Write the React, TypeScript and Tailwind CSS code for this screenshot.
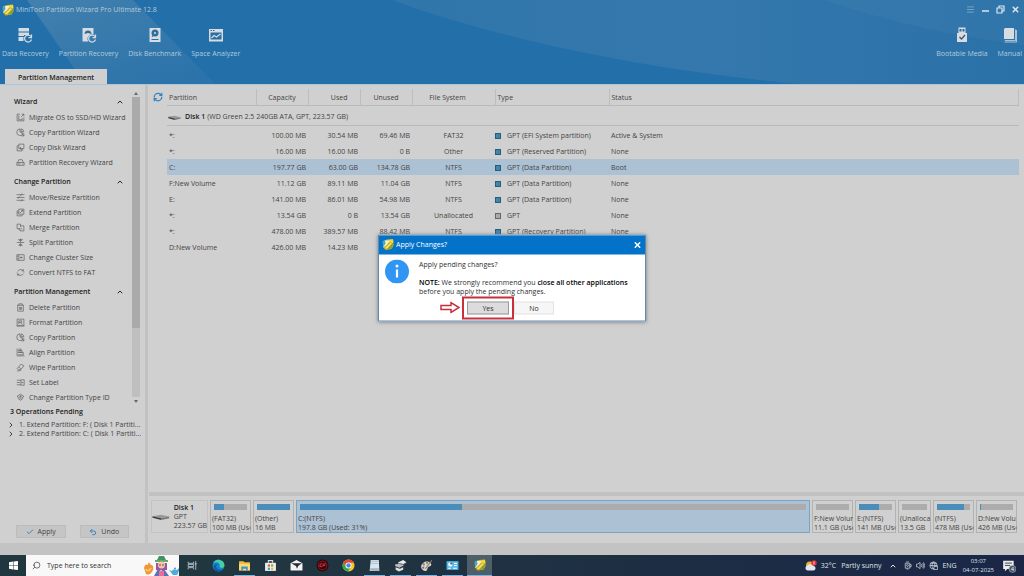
import type { ReactNode } from "react";
import { ChevronUp, ChevronRight, Search, Menu, X, RefreshCw, Check, Undo2 } from "lucide-react";

const sections = [
  {
    title: "Wizard",
    items: [
      ["migrate", "Migrate OS to SSD/HD Wizard"],
      ["pie", "Copy Partition Wizard"],
      ["copy", "Copy Disk Wizard"],
      ["drive", "Partition Recovery Wizard"],
    ],
  },
  {
    title: "Change Partition",
    items: [
      ["sliders", "Move/Resize Partition"],
      ["extend", "Extend Partition"],
      ["merge", "Merge Partition"],
      ["split", "Split Partition"],
      ["cluster", "Change Cluster Size"],
      ["convert", "Convert NTFS to FAT"],
    ],
  },
  {
    title: "Partition Management",
    items: [
      ["trash", "Delete Partition"],
      ["format", "Format Partition"],
      ["pie", "Copy Partition"],
      ["align", "Align Partition"],
      ["wipe", "Wipe Partition"],
      ["label", "Set Label"],
      ["layers", "Change Partition Type ID"],
    ],
  },
];

const rows = [
  { name: "*:", cap: "100.00 MB", used: "30.54 MB", free: "69.46 MB", fs: "FAT32", type: "GPT (EFI System partition)", status: "Active & System" },
  { name: "*:", cap: "16.00 MB", used: "16.00 MB", free: "0 B", fs: "Other", type: "GPT (Reserved Partition)", status: "None" },
  { name: "C:", cap: "197.77 GB", used: "63.00 GB", free: "134.78 GB", fs: "NTFS", type: "GPT (Data Partition)", status: "Boot" },
  { name: "F:New Volume", cap: "11.12 GB", used: "89.11 MB", free: "11.04 GB", fs: "NTFS", type: "GPT (Data Partition)", status: "None" },
  { name: "E:", cap: "141.00 MB", used: "86.01 MB", free: "54.98 MB", fs: "NTFS", type: "GPT (Data Partition)", status: "None" },
  { name: "*:", cap: "13.54 GB", used: "0 B", free: "13.54 GB", fs: "Unallocated", type: "GPT", status: "None" },
  { name: "*:", cap: "478.00 MB", used: "389.57 MB", free: "88.42 MB", fs: "NTFS", type: "GPT (Recovery Partition)", status: "None" },
  { name: "D:New Volume", cap: "426.00 MB", used: "14.23 MB", free: "", fs: "", type: "", status: "" },
];

const blocks = [
  { name: "(FAT32)", size: "100 MB (Us‹", fill: 31, width: "w-[41px]" },
  { name: "(Other)", size: "16 MB", fill: 100, width: "w-[41px]" },
  { name: "C:(NTFS)", size: "197.8 GB (Used: 31%)", fill: 32, width: "flex-1", active: true },
  { name: "F:New Volur", size: "11.1 GB (Us‹", fill: 0, width: "w-[41px]" },
  { name: "E:(NTFS)", size: "141 MB (Us‹", fill: 61, width: "w-[41px]" },
  { name: "(Unalloca", size: "13.5 GB", fill: 0, width: "w-[33px]" },
  { name: "(NTFS)", size: "478 MB (Us‹", fill: 82, width: "w-[41px]" },
  { name: "D:New Volu", size: "426 MB (Us‹", fill: 4, width: "w-[41px]" },
];

const glyphs: Record<string, ReactNode> = {
  migrate: <path d="M7 2H2v12h12V8M5 4v8M5 12h6V9M9 7l5-5M10 2h4v4" />,
  pie: <path d="M7 1.500a6 6 0 1 0 6 8L7 7zM9 1.500a6 6 0 0 1 5 5H9zM10 9l4 5M14 10v4h-4" />,
  copy: <path d="M5 2h9v8H5zM5 5H2v9h9v-4M8 7v4h3" />,
  drive: <path d="M3 8l2-5h6l2 5M1.500 8h13v5h-13zM3 10.500h5M11 10.500h2" />,
  sliders: <path d="M1 3h14M1 8h14M1 13h14M10 1L8 5M6 6L4 10M11 11l-2 4" />,
  extend: <path d="M4 5H2v9h9v-2M5 2h9v9H5zM7 9l5-5M9 4h3v3M2 8h3" />,
  merge: <path d="M2 2h6v3h6v9H7v-4H2zM8 5v2M5 10v2M8 9l3 2" />,
  split: <path d="M1.500 8h13M8 1v5M8 10v5M4 3h8M5 13h6M5 3l3 3 3-3M5 13l3-3 3 3" />,
  cluster: <path d="M1.500 3h13v10h-13zM5 3v10M7 8h5M9 6v4M2 6h2M2 10h2" />,
  convert: <path d="M3 6a6 6 0 0 1 10-1M13 2v3h-3M13 10a6 6 0 0 1-10 1M3 14v-3h3M2 8v2M14 6v2" />,
  trash: <path d="M2 4h12M5 4V1.500h6V4M3 4v10.500h10V4M6 7v5M8 7v5M10 7v5" />,
  format: <path d="M2 2h12v12H2zM5 11V5h5v3H5M8 8l3 4M1 14h14" />,
  align: <path d="M2 1v13h13M4 2h5v3H4M4 5h7v3H4M4 8h9v4H4" />,
  wipe: <path d="M9 2l5 3-6 7H4l-2-2zM2 14c3 1 4-1 7-1M5 7l4 4" />,
  label: <path d="M1.500 4h8M1.500 8h6M1.500 12h8M9 2v12M11 3h3.500v10H11M10 8h3" />,
  layers: <path d="M8 2l6 4-6 4-6-4zM3 9l5 4 5-4M8 4v4M6 6h4" />,
};

function Glyph({ name }: { name: string }) {
  return (
    <svg viewBox="0 0 16 16" className="size-[9px] shrink-0" fill="none" stroke="#666" strokeWidth="1.3">
      {glyphs[name]}
    </svg>
  );
}

function WizardLogo({ className }: { className: string }) {
  return (
    <svg viewBox="0 0 24 24" className={className}>
      <path d="M2 5l8-3 12-1 1 13-4 7-12 2-5-6z" fill="#d9b92f" />
      <path d="M1 6l8-4-1 9-6 6z" fill="#4aa6c8" />
      <path d="M6 4h10l-7 9-7 5 5-8z" fill="#f6f3c4" />
      <path d="M14 3l8-1 1 6-7 3z" fill="#f5d83e" />
      <path d="M19 9l4 2-3 9-9 2z" fill="#82a534" />
      <path d="M4 20L17 8l4 2L10 21z" fill="#fce25a" stroke="#8a7b22" strokeWidth=".8" />
    </svg>
  );
}

function DiskPicture({ className }: { className: string }) {
  return (
    <svg viewBox="0 0 36 14" className={className} preserveAspectRatio="none">
      <path d="M1 5l17-3 17 4-16 4z" fill="#999" />
      <path d="M1 5l18 5v4L1 9z" fill="#3d3d3d" />
      <path d="M19 10l16-4v4l-16 4z" fill="#777" />
    </svg>
  );
}

function ToolButton({ label, children }: { label: string; children: ReactNode }) {
  return (
    <button className="flex flex-col items-center gap-1.5 text-[#b5cbdc]">
      <svg viewBox="0 0 32 32" className="size-4">{children}</svg>
      <span className="leading-[10px]">{label}</span>
    </button>
  );
}

function Header() {
  return (
    <header className="relative bg-[#226fa9] text-[#b5cbdc]">
      <svg className="absolute inset-0 size-full" viewBox="0 0 1024 84" preserveAspectRatio="none">
        <defs>
          <linearGradient id="streak" x1="0" y1="0" x2=".8" y2="1">
            <stop offset="0" stopColor="#4380ae" />
            <stop offset="1" stopColor="#2b73aa" />
          </linearGradient>
          <linearGradient id="facet" x1="0" y1="0" x2="1" y2="0">
            <stop offset="0" stopColor="#3176ab" />
            <stop offset=".5" stopColor="#3478ad" />
            <stop offset="1" stopColor="#2a71a8" />
          </linearGradient>
          <linearGradient id="corner" x1="0" y1="0" x2="1" y2="0">
            <stop offset="0" stopColor="#3679ad" />
            <stop offset="1" stopColor="#3075aa" />
          </linearGradient>
        </defs>
        <path d="M27 0H133L215 84H85z" fill="url(#streak)" />
        <path d="M392 0C457 24 600 66 800 84H1024V0z" fill="url(#facet)" />
        <path d="M825 0Q910 30 1024 45V0z" fill="url(#corner)" />
      </svg>
      <div className="relative">
        <div className="flex h-[19px] items-center gap-0.5 px-0.5">
          <WizardLogo className="size-3" />
          <span className="flex-1">MiniTool Partition Wizard Pro Ultimate 12.8</span>
          <div className="flex items-center gap-1.5 pr-0.5">
            <button aria-label="Menu"><Menu className="size-[9px] opacity-70" /></button>
            <button aria-label="Minimize">
              <svg viewBox="0 0 9 9" className="size-[9px]"><path d="M1 6h7" stroke="#dde6ee" strokeWidth="1.500" /></svg>
            </button>
            <button aria-label="Restore">
              <svg viewBox="0 0 9 9" className="size-[9px]" fill="none" stroke="#dde6ee" strokeWidth="1.200"><path d="M3 3V1h5v5H6M1 3h5v5H1z" /></svg>
            </button>
            <button aria-label="Close"><X className="size-[9px] text-[#dde6ee]" strokeWidth={4} /></button>
          </div>
        </div>
        <div className="flex items-start gap-2.5 px-0.5 pt-2 pb-[10px]">
          <ToolButton label="Data Recovery">
            <path d="M3 2h21v7H3zM3 11h21v5H14v2H3zM3 20h10v8H3z" fill="#d5dce2" />
            <path d="M28 19a7 7 0 1 0 1 6M29 15v6h-6" fill="none" stroke="#d5dce2" strokeWidth="2.500" />
          </ToolButton>
          <ToolButton label="Partition Recovery">
            <path d="M3 2h22v13a9 9 0 0 0-10 14H3z" fill="#d5dce2" />
            <path d="M7 14a7 7 0 0 1 14 0l-7-2z" fill="#2d6e9f" />
            <path d="M28 19a7 7 0 1 0 1 6M29 15v6h-6" fill="none" stroke="#d5dce2" strokeWidth="2.500" />
          </ToolButton>
          <ToolButton label="Disk Benchmark">
            <path d="M5 2h22v28H5z" fill="#d5dce2" />
            <circle cx="16" cy="12" r="7" fill="#2d6e9f" />
            <path d="M16 12l-6 8M9 25h14" stroke="#2d6e9f" strokeWidth="2" />
            <circle cx="16" cy="12" r="2" fill="#d5dce2" />
          </ToolButton>
          <ToolButton label="Space Analyzer">
            <path d="M2 4h28v25H2z" fill="#d5dce2" />
            <path d="M5 11h22v14H5z" fill="#2d6e9f" />
            <path d="M7 22l5-5 5 3 8-6" stroke="#d5dce2" strokeWidth="2.500" fill="none" />
            <path d="M5 7h3M10 7h3" stroke="#2d6e9f" strokeWidth="2" />
          </ToolButton>
          <div className="flex-1" />
          <ToolButton label="Bootable Media">
            <path d="M9 1h14v11h3v18H6V12h3z" fill="#d5dce2" />
            <path d="M11 4h4v5h-4zM17 4h4v5h-4z" fill="#2d6e9f" />
            <path d="M11 20l4 4 7-8" stroke="#45535e" strokeWidth="2.500" fill="none" />
          </ToolButton>
          <ToolButton label="Manual">
            <path d="M6 2h18v22H4V4z" fill="#d5dce2" />
            <path d="M27 5v22H6M29 6v24H5" stroke="#d5dce2" strokeWidth="1.500" fill="none" />
          </ToolButton>
        </div>
        <div className="px-[5px]">
          <button className="block h-[15px] w-[102px] bg-[#d0d0d0] pt-0.5 font-semibold text-[#222]">Partition Management</button>
        </div>
      </div>
    </header>
  );
}

function Sidebar() {
  return (
    <aside className="flex w-[145px] shrink-0 flex-col">
      <div className="flex">
        <div className="flex-1 pt-[9px] pl-3.5">
          {sections.map((s) => (
            <section key={s.title} className="mb-1 last:mb-0">
              <button className="flex h-4 w-full items-center justify-between pr-2 font-semibold text-[#222]">
                {s.title}
                <ChevronUp className="size-2" strokeWidth={3} />
              </button>
              <ul>
                {s.items.map(([icon, label]) => (
                  <li key={label}>
                    <button className="flex h-[15px] items-center gap-1 pl-0.5 whitespace-nowrap">
                      <Glyph name={icon} />
                      {label}
                    </button>
                  </li>
                ))}
              </ul>
            </section>
          ))}
        </div>
        <div className="mt-1 mr-[5px] flex w-2 flex-col items-center">
          <svg viewBox="0 0 8 8" className="size-2"><path d="M2 6l2-3 2 3z" fill="#666" /></svg>
          <div className="w-full flex-1 bg-[#bfbfbf]">
            <div className="h-[77%] w-full bg-[#aaa]" />
          </div>
          <svg viewBox="0 0 8 8" className="size-2"><path d="M2 3l2 3 2-3z" fill="#666" /></svg>
        </div>
      </div>
      <h2 className="pl-2.5 leading-[13px] font-semibold text-[#222]">3 Operations Pending</h2>
      <ul className="px-[7px] pt-0.5 leading-[9px]">
        {["1. Extend Partition: F: ( Disk 1 Partiti...", "2. Extend Partition: C: ( Disk 1 Partiti..."].map((op) => (
          <li key={op} className="flex items-center gap-1 whitespace-nowrap">
            <ChevronRight className="size-2 shrink-0" strokeWidth={3} />
            {op}
          </li>
        ))}
      </ul>
      <div className="mt-auto flex gap-3.5 px-4 pb-[5px]">
        <button className="flex h-[13px] flex-1 items-center justify-center gap-1 border border-[#bcbcbc] bg-[#c5c5c5]">
          <Check className="size-2 text-[#3c84bb]" strokeWidth={3} />Apply
        </button>
        <button className="flex h-[13px] flex-1 items-center justify-center gap-1 border border-[#bcbcbc] bg-[#c5c5c5]">
          <Undo2 className="size-2 text-[#3c84bb]" strokeWidth={3} />Undo
        </button>
      </div>
    </aside>
  );
}

function PartitionTable() {
  const head = "border-r border-[#bdbdbd] pt-0.5 font-normal";
  return (
    <div className="flex items-start pt-1 pr-[5px] pl-1">
      <button aria-label="Refresh" className="mr-1 flex h-4 w-2.5 items-center">
        <RefreshCw className="size-2.5 text-[#3583bf]" strokeWidth={3} />
      </button>
      <table className="flex-1 table-fixed border-collapse">
        <colgroup>
          <col className="w-[89px]" />
          <col className="w-[52px]" />
          <col className="w-[52px]" />
          <col className="w-[52px]" />
          <col className="w-[83px]" />
          <col className="w-[114px]" />
          <col />
        </colgroup>
        <thead>
          <tr className="h-4 border-b border-[#b9b9b9]">
            <th className={`${head} pl-0.5 text-left`}>Partition</th>
            <th className={head}>Capacity</th>
            <th className={`${head} pr-3 text-right`}>Used</th>
            <th className={head}>Unused</th>
            <th className={`${head} pr-3`}>File System</th>
            <th className={`${head} pl-0.5 text-left`}>Type</th>
            <th className={`${head} pl-0.5 text-left`}>Status</th>
          </tr>
        </thead>
        <tbody>
          <tr className="h-5 border-b border-[#b9b9b9]">
            <td colSpan={7}>
              <div className="flex items-center gap-1 pt-1 pl-px">
                <DiskPicture className="h-[5px] w-[13px]" />
                <span><b className="font-semibold text-[#222]">Disk 1</b> (WD Green 2.5 240GB ATA, GPT, 223.57 GB)</span>
              </div>
            </td>
          </tr>
          <tr className="h-[2px]" aria-hidden="true" />
          {rows.map((r, i) => (
            <tr key={i} className={i === 2 ? "h-4 bg-[#adc1d4]" : "h-4"}>
              <td className="pt-0.5 pl-0.5">{r.name}</td>
              <td className="pt-0.5 pr-0.5 text-right">{r.cap}</td>
              <td className="pt-0.5 pr-0.5 text-right">{r.used}</td>
              <td className="pt-0.5 pr-0.5 text-right">{r.free}</td>
              <td className="pt-0.5 text-center">{r.fs}</td>
              <td className="pt-0.5">
                {r.type && (
                  <span className="flex items-center gap-1.5">
                    <span className={r.fs === "Unallocated" ? "size-1.5 border border-[#666] bg-[#aaa]" : "size-1.5 border border-[#275c7c] bg-[#4385ae]"} />
                    {r.type}
                  </span>
                )}
              </td>
              <td className="pt-0.5 pl-0.5">{r.status}</td>
            </tr>
          ))}
        </tbody>
      </table>
    </div>
  );
}

function DiskMap() {
  return (
    <div className="flex gap-[2px] pt-1 pr-[7px] pb-[10px] pl-[2px] leading-[9px] whitespace-nowrap">
      <div className="flex h-[33px] w-[57px] shrink-0 items-center gap-1 border border-[#c3c3c3]">
        <DiskPicture className="h-1.5 w-[18px]" />
        <div><b className="font-semibold text-[#222]">Disk 1</b><br />GPT<br />223.57 GB</div>
      </div>
      {blocks.map((b, i) => (
        <div
          key={i}
          className={`${b.width} h-[33px] border px-px pt-[3px] ${b.active ? "border-[#76a5c8] bg-[#adc1d4]" : "shrink-0 border-[#b2b2b2]"}`}
        >
          <div className="mx-0.5 mb-1 h-1.5 bg-[#acacac]">
            <div className="h-full bg-[#4a8cba]" style={{ width: `${b.fill}%` }} />
          </div>
          <div>{b.name}</div>
          <div>{b.size}</div>
        </div>
      ))}
    </div>
  );
}

function ApplyDialog() {
  return (
    <div role="dialog" aria-labelledby="apply-title" className="absolute top-1/2 left-1/2 w-[268px] -translate-x-1/2 -translate-y-1/2 border border-[#5f89b0] bg-white text-[#303030] shadow-[0_0_4px_#777]">
      <div className="flex h-[19px] items-center gap-0.5 bg-[#0372c9] px-[3px] text-white">
        <WizardLogo className="size-3" />
        <h1 id="apply-title" className="flex-1">Apply Changes?</h1>
        <button aria-label="Close"><X className="size-[9px]" strokeWidth={4} /></button>
      </div>
      <div className="flex gap-2.5 px-1.5 pt-[3px]">
        <svg viewBox="0 0 24 24" className="mt-0.5 size-6 shrink-0">
          <circle cx="12" cy="12" r="12" fill="#2f96f3" />
          <path d="M12 10v8" stroke="#fff" strokeWidth="2.200" />
          <circle cx="12" cy="6.500" r="1.500" fill="#fff" />
        </svg>
        <div className="leading-[9px]">
          <p className="mt-0.5 mb-[9px]">Apply pending changes?</p>
          <p>
            <b className="font-semibold text-black">NOTE:</b> We strongly recommend you <b className="font-semibold text-black">close all other applications</b>
            <br />before you apply the pending changes.
          </p>
        </div>
      </div>
      <div className="flex h-[25px] items-center pt-px pl-[61px]">
        <svg viewBox="0 0 20 12" className="mb-0.5 h-3 w-5" fill="none" stroke="#c8303c" strokeWidth="1.500">
          <path d="M1 4h10V1l8 5-8 5V8H1z" />
        </svg>
        <div className="ml-0.5 border-2 border-[#c8303c] p-[3px]">
          <button className="block h-[13px] w-[42px] border border-[#999] bg-[#dcdcdc]">Yes</button>
        </div>
        <button className="h-[13px] w-10 border border-[#e3e3e3] bg-[#f6f6f6]">No</button>
      </div>
    </div>
  );
}

const apps: { name: string; open?: boolean; art: ReactNode }[] = [
  { name: "Task view", art: <path d="M4 5v3h10V5M4 19v-3h10v3M4 10h10v4H4zM18 4v16M16 9h4" fill="none" stroke="#c8d0d5" strokeWidth="1.500" /> },
  {
    name: "Edge",
    art: (
      <>
        <circle cx="12" cy="12" r="11" fill="#1584d0" />
        <path d="M2 8a11 11 0 0 1 21 4c0 5-9 6-9 1 2-7-8-9-12-5z" fill="#46cfa1" />
        <path d="M8 12c-2 8 8 10 13 6-5 8-17 5-18-3 0-5 6-7 9-4-2 0-4 0-4 1z" fill="#1459a5" />
      </>
    ),
  },
  {
    name: "File Explorer",
    open: true,
    art: (
      <>
        <path d="M2 4h8l2 2h10v15H2z" fill="#f4ba3b" />
        <path d="M2 9h20v12H2z" fill="#fddb74" />
        <path d="M6 14h12v7h-3v-3H9v3H6z" fill="#3f91d0" />
      </>
    ),
  },
  {
    name: "Store",
    art: (
      <>
        <path d="M2 7h20v15H2z" fill="#eee" />
        <path d="M8 7V3h8v4" fill="none" stroke="#ddd" strokeWidth="2" />
        <path d="M7 10h4v4H7z" fill="#e45032" /><path d="M13 10h4v4h-4z" fill="#78b22c" />
        <path d="M7 16h4v4H7z" fill="#2999df" /><path d="M13 16h4v4h-4z" fill="#eeb91f" />
      </>
    ),
  },
  {
    name: "Mail",
    art: (
      <>
        <path d="M1 8l11-6 11 6v13H1z" fill="#f3f3f3" />
        <path d="M2 8h20l-7 5-2 5-2-5z" fill="#222c35" />
      </>
    ),
  },
  {
    name: "CF",
    art: (
      <>
        <circle cx="12" cy="12" r="11" fill="#2b080d" />
        <circle cx="12" cy="12" r="8" fill="none" stroke="#b41622" strokeWidth="1.500" />
        <path d="M12 9H8l-1 5h4M12 14l2-5h4M13 12h4" fill="none" stroke="#e4323a" strokeWidth="1.800" />
      </>
    ),
  },
  {
    name: "Chrome",
    art: (
      <>
        <circle cx="12" cy="12" r="11" fill="#f7c821" />
        <path d="M2.500 6.500A11 11 0 0 1 22 7H12l-4 8z" fill="#e54635" />
        <path d="M2.500 6.500A11 11 0 0 0 11 23l5-8-8 0z" fill="#34a655" />
        <circle cx="12" cy="12" r="5.500" fill="#fff" /><circle cx="12" cy="12" r="4" fill="#4287f0" />
      </>
    ),
  },
  {
    name: "Notepad",
    open: true,
    art: (
      <>
        <path d="M5 2h15l1 20H3z" fill="#dbe5ed" />
        <path d="M6 4h13M6 8h13" stroke="#9db4c9" strokeWidth="1.500" />
        <path d="M4 17h16v5H4z" fill="#a5b5c3" />
      </>
    ),
  },
  {
    name: "Disk tool",
    open: true,
    art: (
      <>
        <path d="M8 6l9-4 6 4-7 5H8z" fill="#eee" /><path d="M2 10l12-2 4 4-8 4-8-3z" fill="#bbb" />
        <path d="M3 15l8 3 6-3v5l-8 3-6-3z" fill="#ddd" /><path d="M8 8l9 2 6-3" stroke="#555" strokeWidth="1.500" fill="none" />
      </>
    ),
  },
  {
    name: "Paint",
    open: true,
    art: (
      <>
        <path d="M2 14C3 5 15 1 20 8c3 5-3 6-5 7s0 5-4 7c-5 1-9-3-9-8z" fill="#d8d4cd" />
        <path d="M10 18L22 2" stroke="#8f7b5d" strokeWidth="2" />
        <circle cx="7" cy="10" r="2" fill="#a56b5d" /><circle cx="13" cy="7" r="2" fill="#6d8a6b" /><circle cx="6" cy="16" r="2" fill="#5f7c98" />
      </>
    ),
  },
  {
    name: "Control Panel",
    open: true,
    art: (
      <>
        <path d="M1 4h22v16H1z" fill="#52b8e8" />
        <circle cx="8" cy="10" r="4" fill="#fff" /><path d="M8 6v4h4A4 4 0 0 0 8 6z" fill="#166fae" />
        <path d="M15 8h5M15 12h5M4 17h5M13 17h7" stroke="#fff" strokeWidth="2" />
      </>
    ),
  },
];

function Taskbar() {
  return (
    <footer className="flex h-[21px] items-stretch bg-linear-to-r from-[#21373f] from-20% to-[#1b2647] text-[#dfe5ea]">
      <button aria-label="Start" className="flex w-[26px] items-center justify-center">
        <svg viewBox="0 0 18 18" className="size-[9px]"><path d="M0 2.500L8 1v7.500H0zM9 1l9-1v8.500H9zM0 9.500h8V17l-8-1.500zM9 9.500h9V18l-9-1z" fill="#fff" /></svg>
      </button>
      <label className="flex w-[153px] items-center bg-[#f8f8f8] pl-1.5 text-[#444]">
        <Search className="size-[9px] -scale-x-100" />
        <input aria-label="Search" placeholder="Type here to search" className="ml-1.5 min-w-0 flex-1 text-[7px] placeholder:text-[#333]" />
        <svg viewBox="0 0 36 21" className="h-[21px] w-9 shrink-0">
          <path d="M1 13q1-5 4-3 0-5 3 0 3 0 2 5-3 6-7 4z" fill="#f1953a" />
          <path d="M3 14q2 4 5-1" stroke="#ffce61" fill="none" strokeWidth="1.500" />
          <path d="M14 5l2-4h5l2 4z" fill="#439261" /><path d="M12 5h13v2H12z" fill="#63aa66" />
          <path d="M13 8h11v7H13z" fill="#9855a2" /><circle cx="18.500" cy="10" r="3.500" fill="#f8c1a7" />
          <path d="M11 21l4-7 3 2 3-2 5 7z" fill="#5a72bc" /><path d="M16 16h5v5h-5z" fill="#ee6d91" />
          <circle cx="17" cy="10" r=".7" fill="#333" /><circle cx="20" cy="10" r=".7" fill="#333" />
          <path d="M26 15l3 1q1-3 5-1l2-2v3l-2 4h-4z" fill="#4eabe0" /><path d="M31 14l1-2 1 2z" fill="#2379ba" />
        </svg>
      </label>
      {apps.map((a) => (
        <button key={a.name} aria-label={a.name} className="flex w-[26px] flex-col items-center">
          <span className="flex flex-1 items-center">
            <svg viewBox="0 0 24 24" className="size-[13px]">{a.art}</svg>
          </span>
          <span className={a.open ? "h-px w-[21px] bg-[#77b2e8]" : "h-px"} />
        </button>
      ))}
      <button aria-label="Partition Wizard" className="ml-0.5 flex w-[25px] items-center justify-center border-b border-[#77b2e8] bg-[#4e5f67]">
        <WizardLogo className="size-3" />
      </button>
      <div className="ml-auto flex items-center pr-2">
        <svg viewBox="0 0 26 24" className="h-3 w-3.5">
          <circle cx="11" cy="11" r="8" fill="#f6ae31" />
          <path d="M4 20a5 5 0 0 1 2-9 6 6 0 0 1 11 1c6-1 7 8 1 9H6z" fill="#dfe6ef" />
          <circle cx="19" cy="6" r="5.500" fill="#d93535" /><path d="M19 3v6" stroke="#fff" strokeWidth="1.500" />
        </svg>
        <span className="ml-[3px]">32°C</span>
        <span className="ml-[5px]">Partly sunny</span>
        <ChevronUp className="ml-2 size-2" strokeWidth={3} />
        <svg viewBox="0 0 20 20" className="ml-1.5 size-[9px]" fill="none" stroke="#dfe5ea" strokeWidth="1.500"><path d="M5 5h10v11H5zM7 2h6M15 8h3v5h-3M8 18h4" /><circle cx="10" cy="10" r="2" /></svg>
        <svg viewBox="0 0 20 20" className="ml-1 size-[9px]" fill="none" stroke="#dfe5ea" strokeWidth="1.500"><path d="M1 7h3l5-4v14l-5-4H1zM12 7q2 3 0 6M15 5q3 5 0 10M17 3q4 7 0 14" /></svg>
        <svg viewBox="0 0 20 20" className="ml-1 size-[9px]" fill="none" stroke="#dfe5ea" strokeWidth="1.500"><circle cx="10" cy="10" r="8" /><path d="M2 10h16M10 2q-7 8 0 16M10 2q7 8 0 16M4 5h12" /><path d="M11 12h8v7h-8z" fill="#1d2940" /></svg>
        <span className="ml-1">ENG</span>
        <div className="ml-1.5 text-center text-[6px] leading-[9px]">
          <div>03:07</div>
          <div>04-07-2025</div>
        </div>
        <button aria-label="4 notifications" className="ml-2">
          <svg viewBox="0 0 24 24" className="size-[14px]">
            <path d="M2 3h18v14H9l-4 4v-4H2z" fill="#eee" /><path d="M5 7h12M5 11h9" stroke="#26304c" strokeWidth="1.500" />
            <circle cx="18" cy="17" r="6" fill="#4a5568" stroke="#a8b0ba" />
            <text x="18" y="20" textAnchor="middle" fontSize="9" fill="#fff">4</text>
          </svg>
        </button>
      </div>
    </footer>
  );
}

export default function App() {
  return (
    <div className="flex min-h-screen flex-col bg-[#d0d0d0] font-['Open_Sans','Noto_Sans',sans-serif] text-[7px] leading-[10px] text-[#444]">
      <div className="relative flex flex-1 flex-col">
        <Header />
        <div className="flex flex-1 border-t border-[#a9c6da]">
          <Sidebar />
          <div className="w-[3px] bg-[#c2c2c2]" />
          <main className="flex min-w-0 flex-1 flex-col pl-px">
            <PartitionTable />
            <div className="mt-auto h-1 bg-[#c1c1c1]" />
            <DiskMap />
          </main>
        </div>
        <div className="h-3 bg-[#c3c3c3]" />
        <ApplyDialog />
      </div>
      <Taskbar />
    </div>
  );
}
